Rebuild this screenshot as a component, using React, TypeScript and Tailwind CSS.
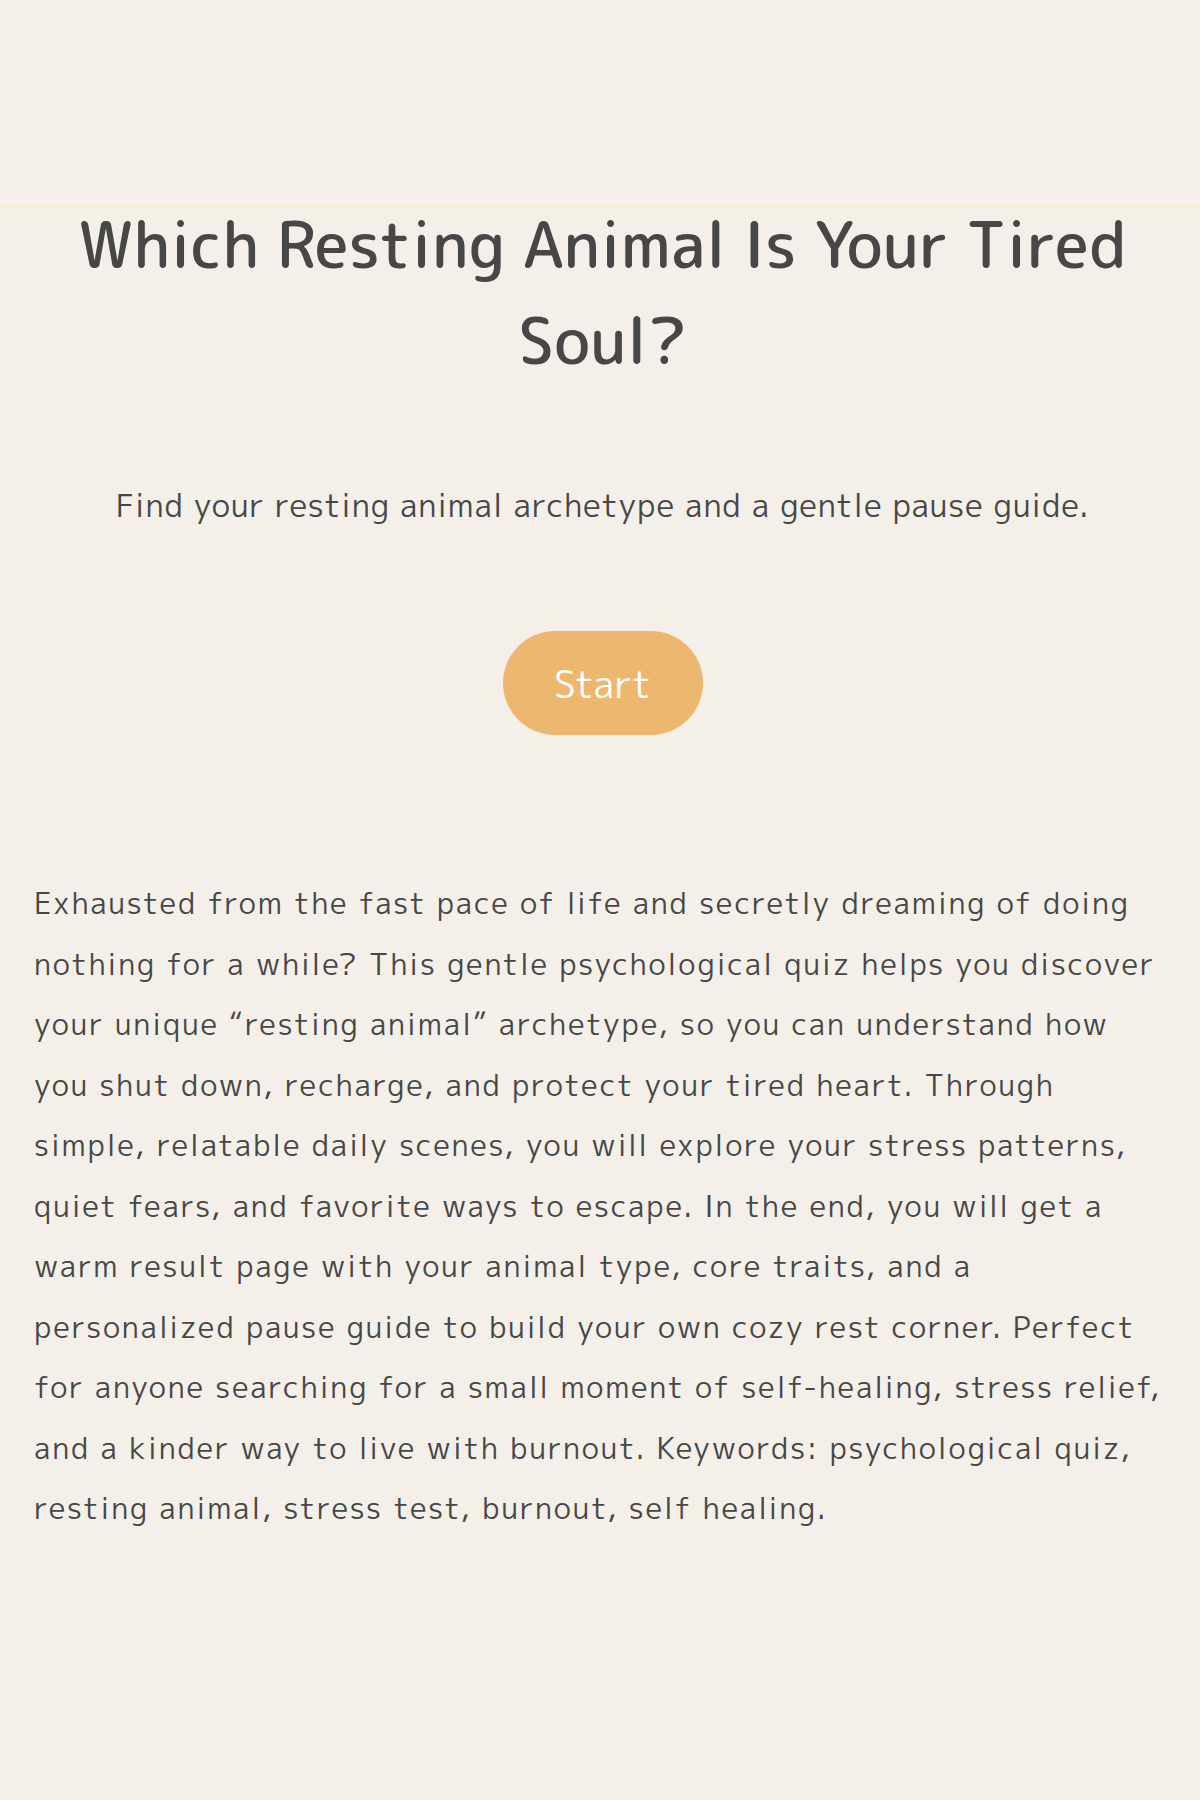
export default function App() {
  return (
    <div className="min-h-[1800px] bg-[#f4f0e9] text-[#474747] font-['M_PLUS_1p','Noto_Sans',sans-serif]">
      {/* Header bar */}
      <header className="h-[208px] border-b-2 border-[#f8edd3]" />

      <main className="px-[34px]">
        <section className="flex flex-col items-center pl-[5px] text-center">
          <h1 className="-mt-[12px] text-[63.5px] leading-[96px] font-medium font-['Rounded_Mplus_1c','M_PLUS_1p',sans-serif] text-[#474747]">
            Which Resting Animal Is Your Tired Soul?
          </h1>
          <p className="mt-[93px] text-[32px] leading-[48px] tracking-[0.025em]">
            Find your resting animal archetype and a gentle pause guide.
          </p>
          <button className="mt-[102px] h-[104px] w-[200px] rounded-full bg-[#eeb76f] text-[38px] text-white">
            Start
          </button>
        </section>

        <p className="mt-[138px] text-[30px] leading-[60.5px] tracking-[0.058em]">
          Exhausted from the fast pace of life and secretly dreaming of doing nothing for a while? This gentle
          psychological quiz helps you discover your unique “resting animal” archetype, so you can understand how you
          shut down, recharge, and protect your tired heart. Through simple, relatable daily scenes, you will explore
          your stress patterns, quiet fears, and favorite ways to escape. In the end, you will get a warm result page
          with your animal type, core traits, and a personalized pause guide to build your own cozy rest corner.
          Perfect for anyone searching for a small moment of self-healing, stress relief, and a kinder way to live with
          burnout. Keywords: psychological quiz, resting animal, stress test, burnout, self healing.
        </p>
      </main>
    </div>
  );
}
